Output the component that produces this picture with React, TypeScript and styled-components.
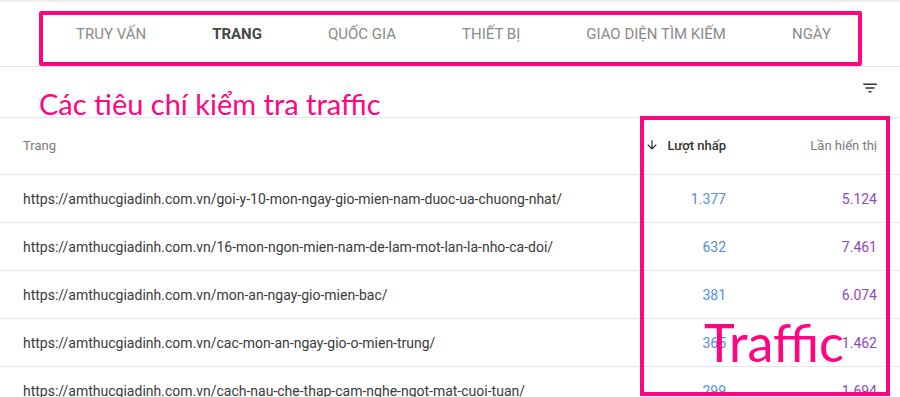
import styled, { createGlobalStyle } from 'styled-components';

const GlobalStyle = createGlobalStyle`
  html, body {
    margin: 0;
    padding: 0;
    background: #fff;
  }
  body {
    font-family: Roboto, 'Liberation Sans', sans-serif;
    width: 900px;
    height: 397px;
    overflow: hidden;
  }
`;

const PINK = '#ff0582';

type Row = { url: string; clicks: string; impressions: string };

const rows: Row[] = [
  { url: 'https://amthucgiadinh.com.vn/goi-y-10-mon-ngay-gio-mien-nam-duoc-ua-chuong-nhat/', clicks: '1.377', impressions: '5.124' },
  { url: 'https://amthucgiadinh.com.vn/16-mon-ngon-mien-nam-de-lam-mot-lan-la-nho-ca-doi/', clicks: '632', impressions: '7.461' },
  { url: 'https://amthucgiadinh.com.vn/mon-an-ngay-gio-mien-bac/', clicks: '381', impressions: '6.074' },
  { url: 'https://amthucgiadinh.com.vn/cac-mon-an-ngay-gio-o-mien-trung/', clicks: '365', impressions: '1.462' },
  { url: 'https://amthucgiadinh.com.vn/cach-nau-che-thap-cam-nghe-ngot-mat-cuoi-tuan/', clicks: '299', impressions: '1.694' },
];

const tabs = ['TRUY VẤN', 'TRANG', 'QUỐC GIA', 'THIẾT BỊ', 'GIAO DIỆN TÌM KIẾM', 'NGÀY'];

const Page = styled.div`
  position: relative;
  width: 900px;
  height: 397px;
  overflow: hidden;
`;

const TabBar = styled.div`
  border-top: 2px solid #efefef;
  border-bottom: 1px solid #e4e4e4;
  padding: 9px 0 0 39px;
`;

const TabBox = styled.div`
  display: flex;
  width: 823px;
  height: 55px;
  box-sizing: border-box;
  border: 4px solid ${PINK};
  border-radius: 2px;
  align-items: center;
`;

const Tab = styled.div<{ $active?: boolean }>`
  padding: 0 33px;
  font-size: 15px;
  line-height: 16px;
  margin-top: -9px;
  color: ${(p) => (p.$active ? '#474747' : '#8a8a8a')};
  font-weight: ${(p) => (p.$active ? 700 : 400)};
  white-space: nowrap;
`;

const TitleBar = styled.div`
  display: flex;
  justify-content: space-between;
  height: 50px;
  padding: 0 21px 0 39px;
`;

const Title = styled.div`
  margin-top: 22px;
  font-family: Lato, 'Open Sans', sans-serif;
  font-size: 29px;
  line-height: 29px;
  color: ${PINK};
  white-space: nowrap;
`;

const FilterIcon = styled.svg`
  margin-top: 12px;
  width: 18px;
  height: 18px;
  fill: #333;
`;

const Grid = styled.div`
  display: grid;
  grid-template-columns: 1fr 120px 151px;
  padding: 0 23px;
  border-top: 1px solid #e6e6e6;
  align-items: center;
`;

const HeaderRow = styled(Grid)`
  height: 56px;
  font-size: 13px;
`;

const BodyRow = styled(Grid)`
  height: 47px;
  font-size: 14px;
`;

const HeadCell = styled.div<{ $strong?: boolean; $right?: boolean }>`
  color: ${(p) => (p.$strong ? '#333' : '#7a7a7a')};
  font-weight: ${(p) => (p.$strong ? 500 : 400)};
  text-align: ${(p) => (p.$right ? 'right' : 'left')};
  display: flex;
  align-items: center;
  justify-content: ${(p) => (p.$right ? 'flex-end' : 'flex-start')};
  gap: 8px;
  margin-top: -2px;
`;

const UrlCell = styled.div`
  color: #3a3a3a;
  white-space: nowrap;
`;

const NumCell = styled.div<{ $color: string }>`
  color: ${(p) => p.$color};
  text-align: right;
`;

const TrafficBox = styled.div`
  position: absolute;
  left: 640px;
  top: 116px;
  width: 250px;
  height: 280px;
  box-sizing: border-box;
  border: 4.5px solid ${PINK};
  pointer-events: none;
`;

const TrafficLabel = styled.div`
  position: absolute;
  left: 704px;
  top: 316px;
  font-family: Lato, 'Open Sans', sans-serif;
  font-size: 52px;
  line-height: 52px;
  color: ${PINK};
`;

export default function App() {
  return (
    <Page>
      <GlobalStyle />
      <TabBar>
        <TabBox>
          {tabs.map((t) => (
            <Tab key={t} $active={t === 'TRANG'}>
              {t}
            </Tab>
          ))}
        </TabBox>
      </TabBar>
      <TitleBar>
        <Title>Các tiêu chí kiểm tra traffic</Title>
        <FilterIcon viewBox="0 0 24 24">
          <path d="M10 18h4v-2h-4v2zM3 6v2h18V6H3zm3 7h12v-2H6v2z" />
        </FilterIcon>
      </TitleBar>
      <HeaderRow>
        <HeadCell>Trang</HeadCell>
        <HeadCell $strong $right>
          <svg width="14" height="14" viewBox="0 0 24 24" fill="#222">
            <path d="M20 12l-1.41-1.41L13 16.17V4h-2v12.17l-5.58-5.59L4 12l8 8 8-8z" />
          </svg>
          Lượt nhấp
        </HeadCell>
        <HeadCell $right>Lần hiển thị</HeadCell>
      </HeaderRow>
      {rows.map((r) => (
        <BodyRow key={r.url}>
          <UrlCell>{r.url}</UrlCell>
          <NumCell $color="#4f8fe6">{r.clicks}</NumCell>
          <NumCell $color="#9048bd">{r.impressions}</NumCell>
        </BodyRow>
      ))}
      <TrafficBox />
      <TrafficLabel>Traffic</TrafficLabel>
    </Page>
  );
}
